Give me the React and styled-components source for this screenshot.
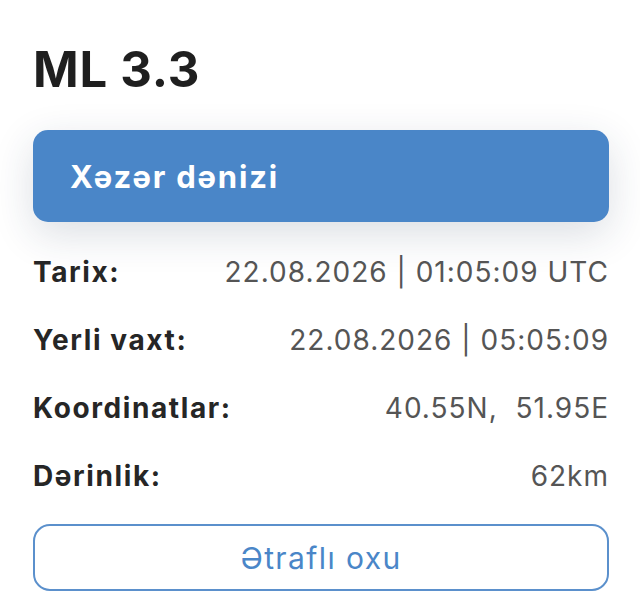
import React from "react";
import styled, { createGlobalStyle } from "styled-components";

const GlobalStyle = createGlobalStyle`
  body {
    margin: 0;
    background: #ffffff;
    font-family: Inter, "Noto Sans", sans-serif;
  }
`;

const Card = styled.div`
  width: 640px;
  height: 612px;
  box-sizing: border-box;
  padding: 38px 31px 0 33px;
  display: flex;
  flex-direction: column;
`;

const Title = styled.h1`
  margin: 0;
  font-size: 49px;
  line-height: 64px;
  font-weight: 700;
  color: #1f1f1f;
  letter-spacing: 0.8px;
`;

const Region = styled.div`
  margin-top: 28px;
  height: 92px;
  border-radius: 15px;
  background: #4a86c8;
  box-shadow: 0 12px 40px rgba(30, 50, 80, 0.16);
  display: flex;
  align-items: center;
  padding: 0 37px;
  color: #ffffff;
  font-size: 31px;
  font-weight: 700;
  letter-spacing: 1.8px;
`;

const List = styled.div`
  margin-top: 16px;
  display: flex;
  flex-direction: column;
`;

const Row = styled.div`
  height: 68px;
  display: flex;
  align-items: center;
  justify-content: space-between;
  font-size: 28px;
`;

const Label = styled.span`
  font-weight: 700;
  color: #262626;
  letter-spacing: 1.6px;
`;

const Value = styled.span`
  color: #555555;
  white-space: pre;
  letter-spacing: 1px;
`;

const MoreButton = styled.button`
  margin-top: 14px;
  height: 67px;
  border: 2px solid #5b90cc;
  border-radius: 17px;
  background: #ffffff;
  color: #4a86c8;
  font-family: inherit;
  font-size: 30px;
  font-weight: 400;
  letter-spacing: 1.4px;
`;

const rows = [
  ["Tarix:", "22.08.2026 | 01:05:09 UTC"],
  ["Yerli vaxt:", "22.08.2026 | 05:05:09"],
  ["Koordinatlar:", "40.55N,  51.95E"],
  ["Dərinlik:", "62km"],
];

export default function App() {
  return (
    <>
      <GlobalStyle />
      <Card>
        <Title>ML 3.3</Title>
        <Region>Xəzər dənizi</Region>
        <List>
          {rows.map(([label, value]) => (
            <Row key={label}>
              <Label>{label}</Label>
              <Value>{value}</Value>
            </Row>
          ))}
        </List>
        <MoreButton>Ətraflı oxu</MoreButton>
      </Card>
    </>
  );
}
